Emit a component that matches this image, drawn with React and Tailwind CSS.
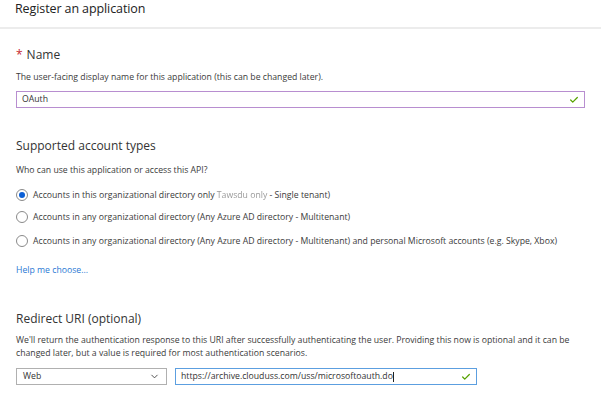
import React from 'react';
import { Check, ChevronDown } from 'lucide-react';

const Radio = ({ checked, children }) => (
  <label className="flex items-center gap-[5px] h-[22px]">
    <span className="w-[12px] h-[12px] rounded-full border border-[#8a8a8a] bg-white flex items-center justify-center shrink-0">
      {checked && <span className="w-[6px] h-[6px] rounded-full bg-[#0b5fd6]" />}
    </span>
    <span className="text-[8.7px] text-[#3b3b3b]">{children}</span>
  </label>
);

export default function App() {
  return (
    <div className="w-[601px] h-[398px] bg-white overflow-hidden text-[#333]" style={{ fontFamily: '"Open Sans", "Noto Sans", sans-serif' }}>
      <div className="h-[29px] border-b-2 border-[#ececec] px-[15px] pt-[1px]">
        <h1 className="text-[12.5px] leading-[16px] text-[#222] tracking-[-0.1px]">Register an application</h1>
      </div>

      <div className="px-[16px]">
        {/* Name */}
        <div className="pt-[16px]">
          <h2 className="text-[12px] text-[#333] leading-[20px]">
            <span className="text-[#c4262e] mr-[4px]">*</span>Name
          </h2>
          <p className="text-[8.7px] text-[#3b3b3b] mt-[6px]">The user-facing display name for this application (this can be changed later).</p>
          <div className="mt-[7px] w-[569px] h-[17px] border border-[#b88ed0] flex items-center px-[5px] justify-between">
            <span className="text-[8.7px] text-[#333]">OAuth</span>
            <Check size={10} strokeWidth={3} className="text-[#57a300]" />
          </div>
        </div>

        {/* Account types */}
        <div className="pt-[28px]">
          <h2 className="text-[12px] text-[#333] leading-[20px]">Supported account types</h2>
          <p className="text-[8.7px] text-[#3b3b3b] mt-[8px]">Who can use this application or access this API?</p>
          <div className="mt-[7px] flex flex-col">
            <Radio checked>
              Accounts in this organizational directory only <span className="text-[#9a9a9a] blur-[0.6px]">Tawsdu only</span> - Single tenant)
            </Radio>
            <Radio>Accounts in any organizational directory (Any Azure AD directory - Multitenant)</Radio>
            <div className="pt-[2px]">
              <Radio>Accounts in any organizational directory (Any Azure AD directory - Multitenant) and personal Microsoft accounts (e.g. Skype, Xbox)</Radio>
            </div>
          </div>
          <a className="block mt-[12px] text-[8.7px] text-[#2a78d4]">Help me choose...</a>
        </div>

        {/* Redirect URI */}
        <div className="pt-[32px]">
          <h2 className="text-[12px] text-[#333] leading-[20px]">Redirect URI (optional)</h2>
          <p className="text-[8.7px] text-[#3b3b3b] mt-[5px] leading-[13px] w-[560px]">
            We'll return the authentication response to this URI after successfully authenticating the user. Providing this now is optional and it can be changed later, but a value is required for most authentication scenarios.
          </p>
          <div className="mt-[8px] flex gap-[8px]">
            <div className="w-[151px] h-[17px] border border-[#b0b0b0] flex items-center justify-between px-[6px]">
              <span className="text-[8.7px] text-[#333]">Web</span>
              <ChevronDown size={11} className="text-[#444]" />
            </div>
            <div className="w-[302px] h-[17px] border border-[#5c9fe0] flex items-center justify-between px-[5px]">
              <span className="text-[8.7px] text-[#333]">https://archive.clouduss.com/uss/microsoftoauth.do<span className="inline-block w-px h-[10px] bg-[#222] align-middle" /></span>
              <Check size={10} strokeWidth={3} className="text-[#57a300]" />
            </div>
          </div>
        </div>
      </div>
    </div>
  );
}
